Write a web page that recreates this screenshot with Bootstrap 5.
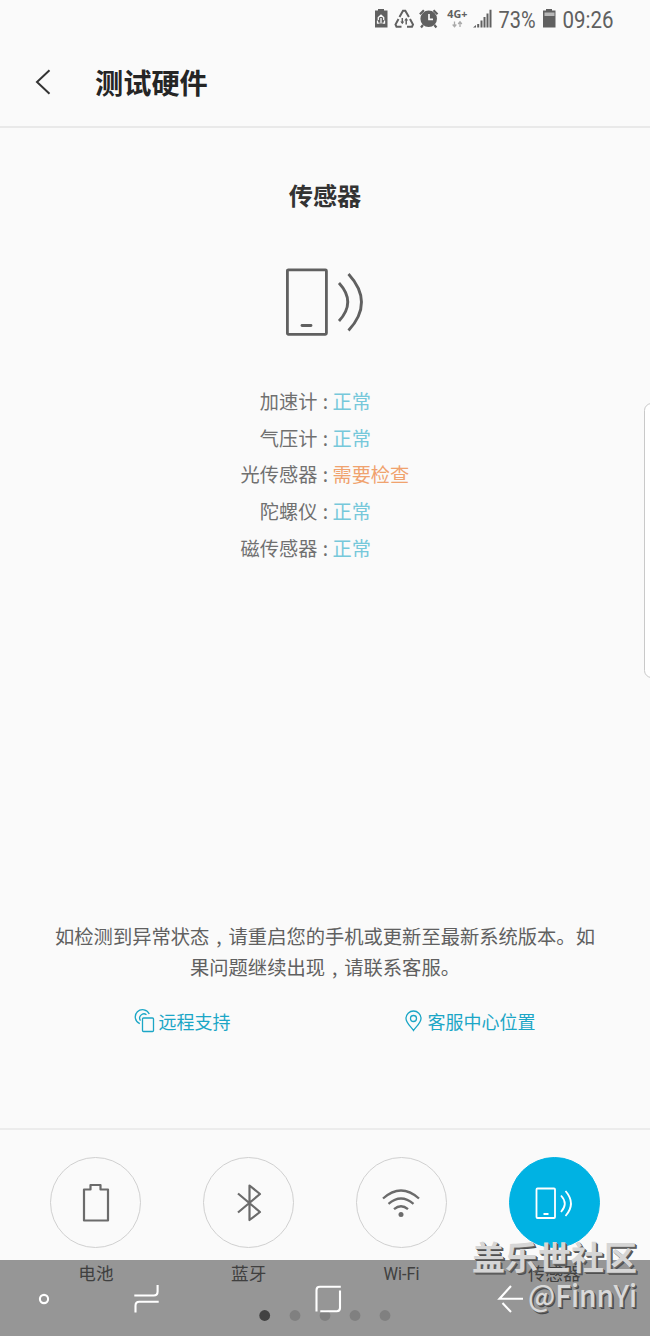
<!DOCTYPE html>
<html lang="zh-CN">
<head>
<meta charset="utf-8">
<meta name="viewport" content="width=device-width, initial-scale=1">
<title>测试硬件</title>
<link href="https://cdn.jsdelivr.net/npm/bootstrap@5.3.0/dist/css/bootstrap.min.css" rel="stylesheet">
<style>
body{background:#fafafa;color:#606060;font-family:"Noto Sans CJK SC",sans-serif;overflow:hidden}
svg{display:block;flex:none;overflow:visible}
.screen{height:1336px;overflow:hidden}
.status{height:40px;padding-right:36px}
.app-head{height:88px;border-bottom:2px solid #e9e9e9;padding-left:35px;padding-bottom:3px}
.app-head h1{font-size:28.2px;font-weight:700;color:#252525;margin-left:44px;line-height:40px}
.sensors{height:1000px}
.sensors h2{font-size:24.2px;font-weight:700;color:#333;line-height:36px;margin-top:49px}
.hero{margin-top:55px}
.results{margin-top:47px;font-size:19.2px;line-height:36.7px;color:#707070}
.results dt{width:328px;font-weight:400;text-align:right;white-space:pre;word-spacing:1px}
.results dd{margin:0 0 0 4.5px;color:#76c8da}
.results dd.alert-check{color:#f0a26e}
.notice{font-size:19.3px;line-height:31px;color:#606060;width:560px}
.comma{display:inline-block;width:1em;text-align:center;text-indent:0}
.helps{font-size:18px;line-height:28px;color:#1ba6c6;margin:24px 0 93px}
.help-remote{margin-left:134.5px;width:269px}
.tabs{border-top:2px solid #ececec;height:208px;padding:27px 19px 0 19.5px}
.tab{width:152.8px;font-size:17.6px;line-height:26px;color:#6b6b6b}
.ring{width:91px;height:91px;border:1.3px solid #d0d0d0;border-radius:50%;margin-bottom:12px}
.ring.on{background:#00b2e3;border-color:#00b2e3}
.navbar-soft{height:76px;background:rgba(0,0,0,.4)}
.edge{right:-9px;top:403px;width:15px;height:275px;border:1.5px solid #c9c9c9;border-radius:9px;background:#fff}
.wm{right:13px;bottom:13px;color:#d6d6d6}
.wm .site{font-size:33px;font-weight:700;line-height:40px;height:47px;color:#d6d6d6;text-shadow:1px 1px 0 #666,2px 2px 0 #505050}
.wm .user{text-shadow:1px 1px 0 #666,2px 2px 0 #484848}
.strokes{fill:none;stroke:currentColor}
</style>
</head>
<body>
<div class="screen position-relative d-flex flex-column">
  <div class="status d-flex justify-content-end">
    <svg width="242" height="40" viewBox="372 0 242 40" fill="#606060">
      <path d="M375 10.500h3V9h6v1.500h3.500v17H375z"/>
      <path d="M378.300 20v-2.500l2.700-2.300 2.700 2.300V20M377.500 20.500v2.700h2M384.500 20.500v2.700h-2M381 18v5.500" stroke="#fafafa" stroke-width="1.300" fill="none"/>
      <g fill="none" stroke="#606060" stroke-width="2">
        <path d="M399.500 17l3.500-6.300h2.300l3.600 6.300M398.500 19l-3 5.500 1 2.300h5M410 19l3 5.500-1 2.300h-5"/>
        <path d="M402.300 18v4.500M406.200 20v4.500" stroke-width="1.500"/>
      </g>
      <path d="M400.300 21.500h4l-2 2.700zM404.200 20.500h4l-2-2.700z"/>
      <circle cx="428.700" cy="18.800" r="8.300"/>
      <path d="M419.900 14.200l4-4M437.500 14.200l-4-4M423 25l-2 2.500M434.400 25l2 2.500" stroke="#606060" stroke-width="2.200"/>
      <path d="M429 14v5.400h4" fill="none" stroke="#fafafa" stroke-width="1.700"/>
      <text x="447.300" y="18" font-family="Open Sans, sans-serif" font-weight="700" font-size="10.800" textLength="20" lengthAdjust="spacingAndGlyphs">4G+</text>
      <path d="M454.500 21.500v5m-1.800-2l1.800 2.300 1.800-2.300M460 27v-5m-1.800 2l1.800-2.300 1.800 2.300" fill="none" stroke="#aaa" stroke-width="1.300"/>
      <path d="M473 27.500l3-2.500v2.500zM477.200 24h2v3.500h-2zM480.500 20.500h2v7h-2zM483.500 17h2v10.500h-2zM486.500 13.500h2v14h-2zM489.500 9.700h2v17.800h-2z"/>
      <text x="498.600" y="27.800" font-family="Roboto, sans-serif" font-size="23.500" textLength="37" lengthAdjust="spacingAndGlyphs">73%</text>
      <path d="M543 10.500h3V9h6v1.500h3.500v17H543z"/><path fill="#b8b8b8" d="M544.500 12.500h10v3.500h-10z"/>
      <text x="562.500" y="27.800" font-family="Roboto, sans-serif" font-size="23.500" textLength="51" lengthAdjust="spacingAndGlyphs">09:26</text>
    </svg>
  </div>
  <header class="app-head d-flex align-items-center">
    <svg class="strokes" width="16" height="26" viewBox="0 0 16 26" stroke-width="2" color="#333"><path d="M14.500 1.200L2 13l12.500 11.800"/></svg>
    <h1 class="mb-0">测试硬件</h1>
  </header>
  <main class="sensors d-flex flex-column align-items-center">
    <h2 class="mb-0">传感器</h2>
    <svg class="strokes hero" width="80" height="68" viewBox="0 0 80 68" stroke-width="2.800">
      <rect x="2.400" y="1.800" width="39" height="64.500" rx="1"/><path d="M17 57.500h9" stroke-linecap="round"/>
      <path d="M54 15q17.500 19 0 38M63.500 6q26 28.500 0 56.500"/>
    </svg>
    <dl class="results w-100 mb-0">
      <div class="d-flex"><dt>加速计 :</dt><dd>正常</dd></div>
      <div class="d-flex"><dt>气压计 :</dt><dd>正常</dd></div>
      <div class="d-flex"><dt>光传感器 :</dt><dd class="alert-check">需要检查</dd></div>
      <div class="d-flex"><dt>陀螺仪 :</dt><dd>正常</dd></div>
      <div class="d-flex"><dt>磁传感器 :</dt><dd>正常</dd></div>
    </dl>
    <p class="notice text-center mt-auto mb-0">如检测到异常状态<span class="comma">,</span>请重启您的手机或更新至最新系统版本。如<br>果问题继续出现<span class="comma">,</span>请联系客服。</p>
    <div class="helps d-flex w-100">
      <div class="help-remote d-flex align-items-center">
        <svg class="strokes me-1" width="20" height="24" viewBox="0 -0.500 20 24" stroke-width="1.300"><rect x="7.500" y="8.500" width="11" height="13.500" rx="1"/><path d="M4.800 14.200A7.300 7.300 0 1 1 14.300 4.600M5.500 11.200a4.300 4.300 0 0 1 6-6"/></svg>
        <span>远程支持</span>
      </div>
      <div class="d-flex align-items-center">
        <svg class="strokes" style="margin-right:6px" width="18" height="22" viewBox="0 0 18 22" stroke-width="1.300"><path d="M9.500 20.500C7 16.500 2 13 2 8.500a7.500 7.500 0 0 1 15 0c0 4.500-5 8-7.500 12z"/><circle cx="9.500" cy="8.500" r="3"/></svg>
        <span>客服中心位置</span>
      </div>
    </div>
  </main>
  <nav class="tabs d-flex">
    <div class="tab d-flex flex-column align-items-center">
      <div class="ring d-flex align-items-center justify-content-center"><svg class="strokes" width="28" height="40" viewBox="0 0 28 40" stroke-width="2.200" stroke-linejoin="round"><path d="M2 6.500h6.500V2h10v4.500H26v31H2z"/></svg></div>电池
    </div>
    <div class="tab d-flex flex-column align-items-center">
      <div class="ring d-flex align-items-center justify-content-center"><svg class="strokes" width="26" height="40" viewBox="0 0 26 40" stroke-width="2.200" stroke-linejoin="round"><path d="M2 10.500L24 29 13.500 37V2.500L24 11 2 29.500"/></svg></div>蓝牙
    </div>
    <div class="tab d-flex flex-column align-items-center">
      <div class="ring d-flex align-items-center justify-content-center"><svg class="strokes" width="38" height="30" viewBox="0 0 38 30" stroke-width="2.300"><path d="M1 10.500Q19-5.500 37 10.500M6.500 15.800q12.500-10.500 25 0M12 21.200q7-6 14 0"/><circle cx="19" cy="26.500" r="2.500" fill="currentColor" stroke="none"/></svg></div>
      <svg width="37" height="26" fill="currentColor"><text x="0.500" y="19.500" font-family="Roboto, sans-serif" font-size="18.500" textLength="36" lengthAdjust="spacingAndGlyphs">Wi-Fi</text></svg>
    </div>
    <div class="tab d-flex flex-column align-items-center">
      <div class="ring on text-white d-flex align-items-center justify-content-center"><svg class="strokes" width="38" height="32" viewBox="0 0 38 32" stroke-width="1.800"><rect x="1.500" y="1.500" width="18.500" height="29.500" rx="1"/><path d="M8.500 27h5M26 8.500q7.500 8 0 16.500M30.500 4q11 12.500 0 25"/></svg></div>传感器
    </div>
  </nav>
  <div class="edge position-absolute"></div>
  <div class="navbar-soft position-absolute bottom-0 start-0 end-0">
    <svg width="650" height="76" viewBox="0 1260 650 76">
      <g fill="#808080"><circle cx="264.700" cy="1315.500" r="5.400" fill="#424242"/><circle cx="295" cy="1315.500" r="5.400"/><circle cx="325" cy="1315.500" r="5.400"/><circle cx="355" cy="1315.500" r="5.400"/><circle cx="385" cy="1315.500" r="5.400"/></g>
      <g fill="none" stroke="#fff" stroke-width="2.100">
        <circle cx="44" cy="1299" r="4.100"/>
        <path d="M134.300 1295.500h19.500q3.800 0 3.800-4v-6.500M158.700 1301.800h-19.500q-3.700 0-3.700 4v6.700"/>
        <path d="M316.500 1311.500V1290q0-3.300 3.300-3.300h21M340 1290.500v17.500q0 3.200-3.200 3.200h-16.500"/>
        <path d="M511 1286l-11.500 12.700h23.500M502.500 1303l8.500 9"/>
      </g>
    </svg>
  </div>
  <div class="wm position-absolute">
    <div class="site">盖乐世社区</div>
    <svg width="109" height="40" class="user ms-auto" fill="#d9d9d9"><text x="0" y="24" font-family="Noto Sans CJK SC, sans-serif" font-weight="500" font-size="30" textLength="109" lengthAdjust="spacingAndGlyphs">@FinnYi</text></svg>
  </div>
</div>
<script src="https://cdn.jsdelivr.net/npm/bootstrap@5.3.0/dist/js/bootstrap.bundle.min.js"></script>
</body>
</html>
